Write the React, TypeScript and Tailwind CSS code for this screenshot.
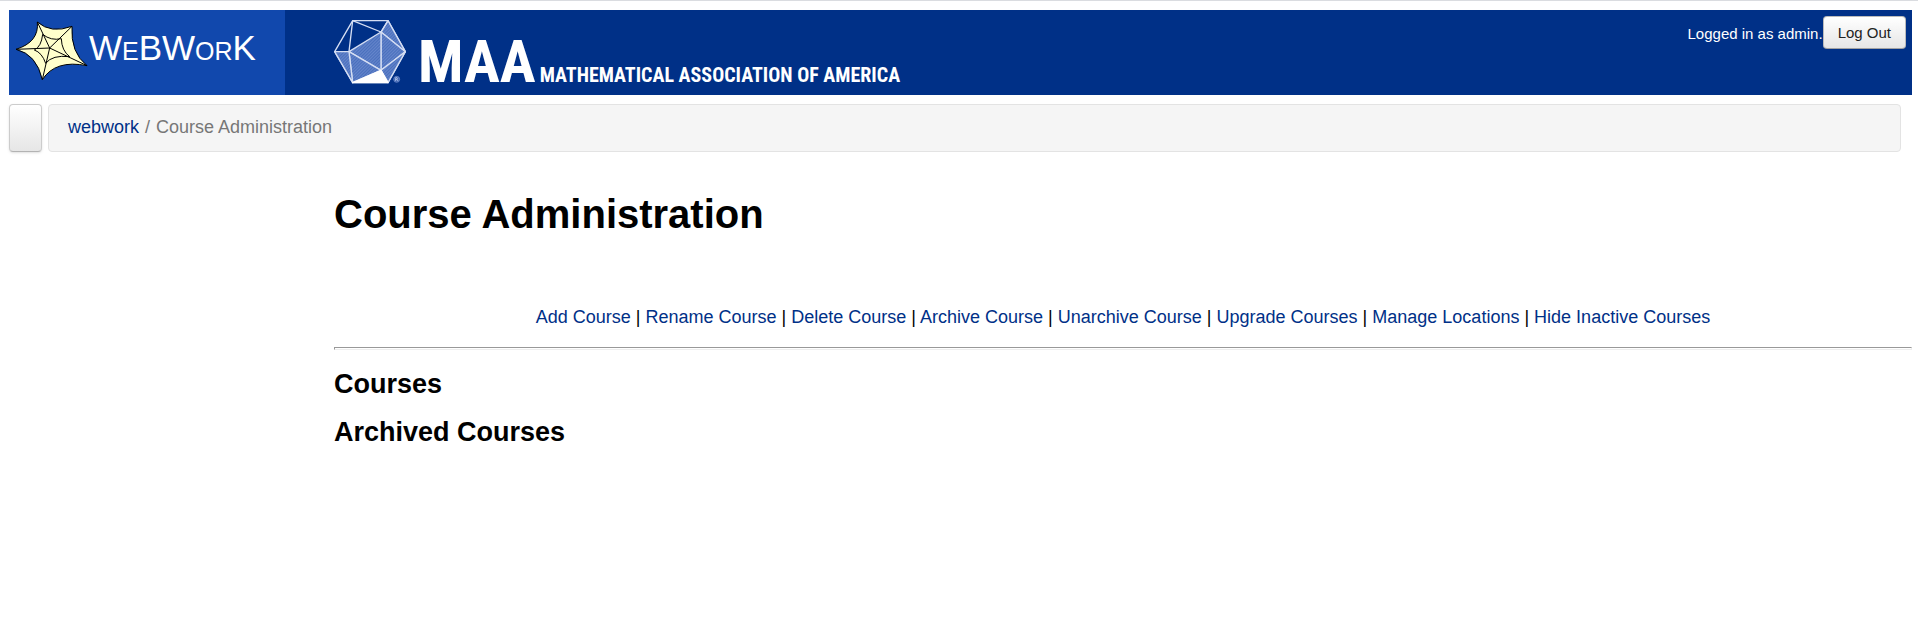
const courseLinks = [
    'Add Course',
    'Rename Course',
    'Delete Course',
    'Archive Course',
    'Unarchive Course',
    'Upgrade Courses',
    'Manage Locations',
    'Hide Inactive Courses',
];

function WebIcon() {
    return (
        <svg width="74" height="62" viewBox="0 0 222 186" fill="none" stroke="#000" strokeWidth="3" aria-hidden="true">
            {/* outer web */}
            <path
                d="M3 88 Q73 66 67 6 Q108 42 171 19 Q166 98 216 137 Q121 118 82 179 Q65 103 3 88Z"
                fill="#ffffcc"
            />
            {/* inner ring */}
            <path d="M83 43 Q108 63 139 56 Q140 92 164 110 Q112 104 92 130 Q81 98 58 90 Q79 80 83 43Z" />
            {/* spokes */}
            <path d="M104 84 L3 88 M104 84 L67 6 M104 84 L171 19 M104 84 L216 137 M104 84 L82 179" />
        </svg>
    );
}

function Icosahedron() {
    return (
        <svg width="74" height="66" viewBox="0 0 222 198" stroke="#d5def3" strokeWidth="4" strokeLinejoin="round" aria-hidden="true">
            <defs>
                <pattern id="hatch" width="4" height="4" patternUnits="userSpaceOnUse" patternTransform="rotate(25)">
                    <rect width="4" height="4" fill="#4a70bd" stroke="none" />
                    <rect width="4" height="2" fill="#6585cb" stroke="none" />
                </pattern>
            </defs>
            <path d="M56 5 H162 L214 98 L162 191 H56 L2 98Z" fill="none" />
            <path d="M162 5 L214 98 L141 39Z" fill="url(#hatch)" />
            <path d="M141 39 L214 98 L141 154Z" fill="url(#hatch)" />
            <path d="M141 154 L214 98 L162 191Z" fill="url(#hatch)" />
            <path d="M141 39 L141 154 L45 98Z" fill="url(#hatch)" />
            <path d="M45 98 L141 154 L56 191Z" fill="url(#hatch)" />
            <path d="M2 98 H45 L56 191Z" fill="url(#hatch)" />
            <path d="M56 5 L141 39 M56 5 L45 98 M141 39 L162 5" fill="none" />
            <path d="M56 191 L141 154 L162 191Z" fill="#fff" stroke="#fff" />
            <circle cx="188" cy="181" r="9" fill="#3f66b5" stroke="#7893cf" strokeWidth="2" />
            <path d="M185 186 V176 H189 Q192 179 189 181 H185 M189 181 L192 186" fill="none" strokeWidth="2" />
        </svg>
    );
}

function Masthead() {
    return (
        <header className="flex h-[85px] bg-[#003087] text-white">
            <a href="#" className="flex w-[276px] items-start bg-[#1148ad] pt-2.5 pl-1.5">
                <WebIcon />
                <span className="pt-2 text-[35px] leading-10 [font-variant:small-caps]">WeBWorK</span>
            </a>
            <a href="#" className="ml-[49px] flex items-end pb-2.5 font-['Roboto_Condensed','Liberation_Sans_Narrow','Liberation_Sans',sans-serif] font-bold">
                <Icosahedron />
                <span className="ml-2.5 text-[60px] leading-[46px]">MAA</span>
                <span className="ml-1 text-xl leading-5">MATHEMATICAL ASSOCIATION OF AMERICA</span>
            </a>
            <div className="ml-auto flex items-start pt-1.5 pr-1.5 text-[15px]">
                <span className="pt-2 leading-5">Logged in as admin.</span>
                <button className="h-[33px] rounded border border-[#bbb] border-b-[#a2a2a2] bg-linear-to-b from-white to-[#e6e6e6] px-3.5 leading-5 text-[#222]">
                    Log Out
                </button>
            </div>
        </header>
    );
}

export default function App() {
    return (
        <div className="min-h-screen border-t border-[#dadce0] bg-white pt-[9px] pr-1.5 pb-4 pl-[9px] font-['Liberation_Sans',Arial,sans-serif] text-lg leading-6 text-black">
            <Masthead />
            <div className="mt-[9px] mr-[11px] flex gap-1.5">
                <button
                    aria-label="Toggle navigation"
                    className="w-[33px] rounded border border-[#ccc] border-b-[#b3b3b3] bg-linear-to-b from-white to-[#e6e6e6] shadow-sm"
                />
                <nav aria-label="Breadcrumb" className="flex h-12 grow items-start rounded border border-[#e3e3e3] bg-[#f5f5f5] px-[19px] pt-2.5">
                    <a href="#" className="text-[#003087]">webwork</a>
                    <span className="px-1.5 text-[#777]">/</span>
                    <span className="text-[#777]">Course Administration</span>
                </nav>
            </div>
            <main className="ml-[325px]">
                <h1 className="pt-9 text-[40px] leading-[52px] font-bold">Course Administration</h1>
                <p className="mt-[65px] text-center">
                    {courseLinks.map((label, i) => (
                        <span key={label}>
                            {i > 0 && ' | '}
                            <a href="#" className="text-[#003087]">{label}</a>
                        </span>
                    ))}
                </p>
                <hr className="mt-[18px] h-[3px] border border-[#eee] border-t-[#999] border-l-[#999]" />
                <h2 className="mt-4 text-[27px] leading-9 font-bold">Courses</h2>
                <h2 className="mt-3 text-[27px] leading-9 font-bold">Archived Courses</h2>
            </main>
        </div>
    );
}
